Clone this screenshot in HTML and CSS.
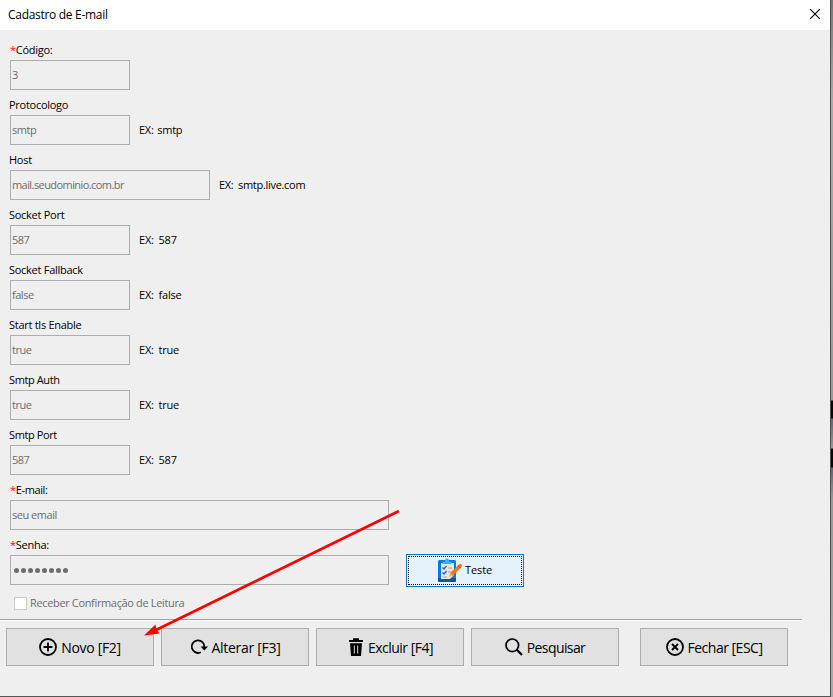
FILE: index.html
```html
<!DOCTYPE html>
<html lang="pt-BR">
<head>
<meta charset="utf-8">
<title>Cadastro de E-mail</title>
<link rel="stylesheet" href="styles.css">
</head>
<body>
<div class="screen">
<main class="window">
  <header class="titlebar">
    <h1>Cadastro de E-mail</h1>
    <svg class="close" viewBox="0 0 10 10" width="10" height="10"><path d="M0 0L10 10M10 0L0 10" stroke="#000" stroke-width="1.15"/></svg>
  </header>
  <form class="fields">
    <div class="field"><label class="req"><b>*</b><span>Código:</span></label><div class="row"><div class="box">3</div></div></div>
    <div class="field"><label>Protocologo</label><div class="row"><div class="box">smtp</div><span class="hint">EX: smtp</span></div></div>
    <div class="field"><label>Host</label><div class="row"><div class="box medium">mail.seudominio.com.br</div><span class="hint host">EX: smtp.live.com</span></div></div>
    <div class="field"><label>Socket Port</label><div class="row"><div class="box">587</div><span class="hint long">EX: 587</span></div></div>
    <div class="field"><label>Socket Fallback</label><div class="row"><div class="box">false</div><span class="hint long">EX: false</span></div></div>
    <div class="field"><label>Start tls Enable</label><div class="row"><div class="box">true</div><span class="hint long">EX: true</span></div></div>
    <div class="field"><label class="tight">Smtp Auth</label><div class="row"><div class="box">true</div><span class="hint long">EX: true</span></div></div>
    <div class="field"><label class="tight">Smtp Port</label><div class="row"><div class="box">587</div><span class="hint long">EX: 587</span></div></div>
    <div class="field"><label class="req"><b>*</b><span class="tight">E-mail:</span></label><div class="row"><div class="box wide">seu email</div></div></div>
    <div class="field"><label class="req"><b>*</b><span>Senha:</span></label><div class="row">
      <div class="box wide password"><i></i><i></i><i></i><i></i><i></i><i></i><i></i><i></i></div>
      <button type="button" class="test"><span class="focus">
        <svg viewBox="0 0 24 24" width="24" height="24">
          <rect x="0" y="2" width="18" height="22" rx="1.5" fill="#0878dc"/>
          <path d="M0 20H18V22.500Q18 24 16.500 24H1.500Q0 24 0 22.500Z" fill="#0755ae"/>
          <path d="M3 5H16V17L12 21H3Z" fill="#e9e6d9"/>
          <path d="M4.500 5V3.500H7Q7 .5 9 .5T11 3.500H13.500V6H4.500Z" fill="#35b4ff"/>
          <path d="M4.500 9.500L6 11L8.500 8M4.500 14.500L6 16L8.500 13" stroke="#176cc8" stroke-width="1.400" fill="none"/>
          <path d="M10 10H14M10 14H13M5 19H9" stroke="#aaa89f"/>
          <path d="M11.500 18.500L12.500 14.500L21 6.500Q22.500 5.200 23.500 6.500T23 9.500L15 17.500Z" fill="#ff750c"/>
          <path d="M20 7.500L22.500 10" stroke="#a9714e" stroke-width="1.500"/>
          <path d="M11.500 18.500L12.500 14.500L15 17.500Z" fill="#ffb066"/>
        </svg><span class="caption">Teste</span></span></button>
    </div></div>
    <div class="check"><span class="tick"></span><span class="caption">Receber Confirmação de Leitura</span></div>
  </form>
  <div class="rule"></div>
  <nav class="actions">
    <button type="button"><svg viewBox="0 0 18 18" width="18" height="18"><circle cx="9" cy="9" r="8" fill="none" stroke="#000" stroke-width="1.800"/><path d="M9 4.500V13.500M4.500 9H13.500" stroke="#000" stroke-width="1.800"/></svg><span>Novo [F2]</span></button>
    <button type="button"><svg viewBox="0 0 18 18" width="18" height="18"><path d="M10.800 14.300A6.300 6.300 0 1 1 14.300 9.200" fill="none" stroke="#000" stroke-width="1.800"/><path d="M10.500 8.500H18L14.300 12.500Z"/></svg><span>Alterar [F3]</span></button>
    <button type="button" class="delete"><svg viewBox="0 0 16 18" width="16" height="18"><path d="M1 2H5V.3H11V2H15V4H1ZM2 5.200H14L13 18H3Z"/><path d="M6.300 7.500V15.500M9.700 7.500V15.500" stroke="#ddd" stroke-width="1"/></svg><span>Excluir [F4]</span></button>
    <button type="button" class="search"><svg viewBox="0 0 18 18" width="18" height="18"><circle cx="7.300" cy="7.300" r="6.300" fill="none" stroke="#000" stroke-width="1.700"/><path d="M11.800 11.800L17 17" stroke="#000" stroke-width="2.200"/></svg><span>Pesquisar</span></button>
    <button type="button" class="exit"><svg viewBox="0 0 18 18" width="18" height="18"><circle cx="9" cy="9" r="8" fill="none" stroke="#000" stroke-width="1.800"/><path d="M6 6L12 12M12 6L6 12" stroke="#000" stroke-width="2"/></svg><span>Fechar [ESC]</span></button>
  </nav>
</main>
<div class="backdrop"></div>
<svg class="arrow" viewBox="0 0 833 697" width="833" height="697"><path d="M398 511.500L156 630" stroke="#f00" stroke-width="2.600" stroke-linecap="round"/><path d="M144 635.500L155.500 624.500L156.500 629.500L159.500 633.500Z" fill="#f00"/></svg>
</div>
</body>
</html>
```
FILE: styles.css
```css
* { box-sizing: border-box; }
body { margin: 0; font-family: "Open Sans", sans-serif; color: #000; }
.screen { position: relative; display: flex; width: 833px; height: 697px; overflow: hidden; }
.window { width: 831px; height: 697px; background: #efefef; border-right: 1px solid #505050; border-bottom: 1px solid #555; }
.backdrop { width: 2px; background: linear-gradient(#777 0, #aaa 100px, #999 400px, #080808 401px, #080808 418px, #5e6575 419px, #999 448px, #080808 449px, #080808 467px, #5e6575 468px, #999 500px, #aaa 697px); }
.titlebar { height: 30px; background: #fff; display: flex; align-items: center; justify-content: space-between; padding: 0 10px 0 8px; }
h1 { margin: 0; font-size: 12px; line-height: 16px; font-weight: 400; letter-spacing: -.3px; }
.close { margin-top: -2px; }
.fields { display: flex; flex-direction: column; gap: 5px; padding: 10px 0 0 10px; height: 589px; font-size: 11px; line-height: 14px; letter-spacing: -.25px; }
.field { height: 50px; }
label { display: flex; align-items: center; height: 20px; margin-left: -1px; letter-spacing: -.27px; }
label.req { margin-left: 0; }
label b { font-weight: 400; color: #f00; }
.tight { letter-spacing: -.4px; }
.row { display: flex; align-items: center; height: 30px; }
.box { width: 120px; height: 30px; border: 1px solid #abadb3; padding-left: 1px; display: flex; align-items: center; color: #6d6d6d; letter-spacing: -.48px; }
.medium { width: 200px; letter-spacing: -.57px; }
.wide { width: 379px; }
.hint { margin-left: 9px; word-spacing: 1px; }
.hint.long { word-spacing: 2px; letter-spacing: -.18px; }
.hint.host { word-spacing: 2px; letter-spacing: -.3px; }
.password { gap: 2px; padding-left: 3px; }
.password i { width: 5px; height: 5px; border-radius: 50%; background: #6d6d6d; }
button { font-family: inherit; color: #000; margin: 0; }
.test { width: 118px; height: 33px; margin-left: 17px; padding: 1px; border: 1px solid #0078d7; background: #e5f1fb; font-size: 11px; letter-spacing: -.1px; }
.focus { display: flex; height: 29px; align-items: center; justify-content: center; gap: 3px; border: 1px dotted #000; }
.caption { padding-bottom: 2px; }
.check { display: flex; align-items: center; gap: 3px; height: 13px; margin: 7px 0 0 4px; color: #6d6d6d; letter-spacing: -.35px; }
.tick { width: 13px; height: 13px; border: 1px solid #ccc; background: #fff; }
.rule { width: 802px; height: 2px; border-top: 1px solid #a0a0a0; background: #fff; }
.actions { display: flex; gap: 7px; padding: 7px 0 0 6px; }
.actions button { width: 148px; height: 38px; padding: 0; border: 1px solid #adadad; background: #e1e1e1; display: flex; align-items: center; justify-content: center; gap: 4px; font-size: 14px; letter-spacing: -.3px; }
.actions span { padding-top: 1px; }
.actions .delete { padding-left: 1px; letter-spacing: -.5px; }
.actions .search { letter-spacing: -.6px; }
.actions .exit { margin-left: 14px; letter-spacing: -.5px; }
.arrow { position: absolute; inset: 0; pointer-events: none; }
```
